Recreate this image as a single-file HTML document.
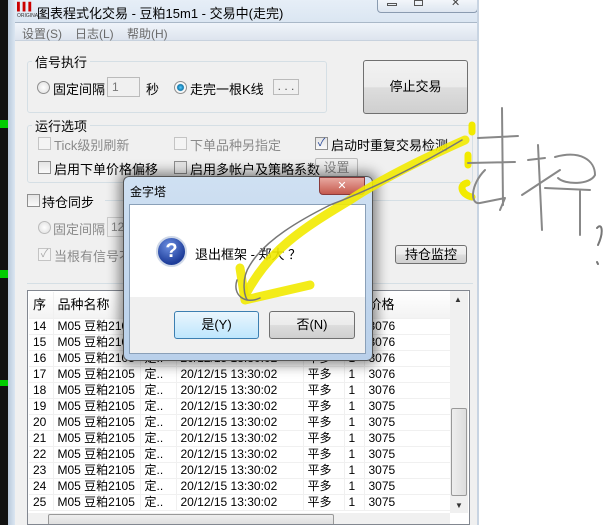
<!DOCTYPE html>
<html><head><meta charset="utf-8"><style>
*{margin:0;padding:0;box-sizing:border-box}
body{width:610px;height:525px;overflow:hidden;background:#fff;position:relative;font-family:"Liberation Sans","Noto Sans CJK SC",sans-serif;font-size:12px;color:#000}
.a{position:absolute;white-space:nowrap}
.cb{position:absolute;width:13px;height:13px;border:1px solid #8f8f8f;background:linear-gradient(#e4e4e4,#fafafa)}
.cb.d{border-color:#c4c4c4;background:#f4f4f4}
.rd{position:absolute;width:13px;height:13px;border-radius:50%;border:1px solid #8f8f8f;background:radial-gradient(#fff,#ddd)}
.btn{position:absolute;border:1px solid #707070;border-radius:3px;background:linear-gradient(#f2f2f2 0,#ebebeb 50%,#dddddd 51%,#cfcfcf);text-align:center}
.grp{position:absolute;border:1px solid #d5dfe5;border-radius:3px}
.lbl{position:absolute;background:#f0f0f0;padding:0 3px;font-size:13px}
table{border-collapse:collapse;font-size:12px;table-layout:fixed}
td{height:16px;line-height:14px;border-right:1px solid #f0f0f0;border-bottom:1px solid #f0f0f0;padding:0 0 0 4px;white-space:nowrap;overflow:hidden}
</style></head><body>
<div class="a" style="left:0;top:0;width:8px;height:525px;background:#111"></div>
<div class="a" style="left:0;top:120px;width:8px;height:8px;background:#0c0"></div>
<div class="a" style="left:0;top:270px;width:8px;height:8px;background:#0c0"></div>
<div class="a" style="left:0;top:380px;width:8px;height:6px;background:#0c0"></div>
<div class="a" style="left:8px;top:0;width:7px;height:525px;background:linear-gradient(90deg,#b9c9db,#dbe6f2)"></div>
<div class="a" style="left:15px;top:0;width:462px;height:22px;background:linear-gradient(#e6eef7,#dbe6f2)"></div>
<div class="a" style="left:17px;top:3px;width:16px;height:14px;font-size:8px;color:#c00;line-height:8px">▌▌▌<br><span style="font-size:5px;color:#333">ORIGINALS</span></div>
<div class="a" style="left:37px;top:3px;font-size:13px">图表程式化交易 - 豆粕15m1 - 交易中(走完)</div>
<div class="a" style="left:377px;top:-2px;width:101px;height:15px;border:1px solid #8a9bb0;border-radius:0 0 4px 4px;background:linear-gradient(#f4f7fb,#dde6f0)"></div>
<div class="a" style="left:387px;top:3px;width:10px;height:3px;border:1px solid #555"></div>
<div class="a" style="left:414px;top:0px;width:9px;height:6px;border:1px solid #555"></div>
<div class="a" style="left:451px;top:-4px;font-size:11px;color:#444">✕</div>
<div class="a" style="left:15px;top:22px;width:462px;height:19px;background:linear-gradient(#f0f4fa,#dde4ee);border-top:1px solid #aab8c8;border-bottom:1px solid #c8d2de"></div>
<div class="a" style="left:22px;top:25px;color:#6a6a6a">设置(S)</div>
<div class="a" style="left:75px;top:25px;color:#6a6a6a">日志(L)</div>
<div class="a" style="left:127px;top:25px;color:#6a6a6a">帮助(H)</div>
<div class="a" style="left:15px;top:41px;width:462px;height:484px;background:#f0f0f0"></div>
<div class="grp" style="left:27px;top:61px;width:300px;height:52px"></div>
<div class="lbl" style="left:32px;top:52px">信号执行</div>
<div class="rd" style="left:37px;top:81px"></div>
<div class="a" style="left:53px;top:79px;font-size:13px">固定间隔</div>
<div class="a" style="left:107px;top:77px;width:33px;height:20px;border:1px solid #bbb;background:#f0f0f0;color:#777;padding:2px 4px">1</div>
<div class="a" style="left:146px;top:79px;font-size:13px">秒</div>
<div class="rd" style="left:174px;top:81px;background:radial-gradient(#5cf 0,#17a 3px,#fff 4px,#ddd)"></div>
<div class="a" style="left:190px;top:79px;font-size:13px">走完一根K线</div>
<div class="a" style="left:273px;top:79px;width:26px;height:16px;border:1px solid #bbb;text-align:center;line-height:12px;color:#555">. . .</div>
<div class="btn" style="left:363px;top:60px;width:105px;height:54px;line-height:52px;font-size:13px">停止交易</div>
<div class="grp" style="left:27px;top:125px;width:446px;height:58px"></div>
<div class="lbl" style="left:32px;top:116px">运行选项</div>
<div class="cb d" style="left:38px;top:137px"></div><div class="a" style="left:54px;top:135px;color:#8a8a8a;font-size:13px">Tick级别刷新</div>
<div class="cb d" style="left:174px;top:137px"></div><div class="a" style="left:190px;top:135px;color:#8a8a8a;font-size:13px">下单品种另指定</div>
<div class="cb" style="left:315px;top:137px;color:#2a4a9a;font-size:11px;line-height:11px;text-align:center">✓</div><div class="a" style="left:331px;top:135px;font-size:13px">启动时重复交易检测</div>
<div class="cb" style="left:38px;top:161px"></div><div class="a" style="left:54px;top:159px;font-size:13px">启用下单价格偏移</div>
<div class="cb" style="left:174px;top:161px"></div><div class="a" style="left:190px;top:159px;font-size:13px">启用多帐户及策略系数</div>
<div class="a" style="left:315px;top:158px;width:43px;height:19px;border:1px solid #bbb;border-radius:2px;text-align:center;color:#888;line-height:17px;font-size:13px">设置</div>
<div class="cb" style="left:27px;top:194px"></div><div class="a" style="left:42px;top:192px;font-size:13px">持仓同步</div>
<div class="a" style="left:105px;top:200px;width:368px;height:1px;background:#d5dfe5"></div>
<div class="rd" style="left:38px;top:221px;border-color:#bbb"></div><div class="a" style="left:53px;top:219px;color:#8a8a8a;font-size:13px">固定间隔</div>
<div class="a" style="left:107px;top:217px;width:30px;height:20px;border:1px solid #ccc;color:#888;padding:2px 3px">12</div>
<div class="cb d" style="left:38px;top:248px;color:#aaa;font-size:11px;line-height:11px;text-align:center">✓</div><div class="a" style="left:54px;top:246px;color:#8a8a8a;font-size:13px">当根有信号不</div>
<div class="btn" style="left:395px;top:245px;width:72px;height:19px;line-height:17px;font-size:13px">持仓监控</div>
<div class="a" style="left:27px;top:283px;width:446px;height:1px;background:#d5dfe5"></div>
<div class="a" style="left:27px;top:290px;width:443px;height:235px;border:1px solid #828790;background:#fff;overflow:hidden">
<table style="position:absolute;left:1px;top:1px;width:422px">
<colgroup><col style="width:24px"><col style="width:87px"><col style="width:36px"><col style="width:127px"><col style="width:41px"><col style="width:20px"><col></colgroup>
<tr style="background:linear-gradient(#fff,#f3f3f3)"><td style="height:26px;line-height:24px;font-size:13px">序</td><td style="font-size:13px">品种名称</td><td></td><td></td><td></td><td></td><td style="font-size:13px">价格</td></tr>
<tr><td>14</td><td>M05 豆粕2105</td><td>定..</td><td>20/12/15 13:30:02</td><td>平多</td><td>1</td><td>3076</td></tr>
<tr><td>15</td><td>M05 豆粕2105</td><td>定..</td><td>20/12/15 13:30:02</td><td>平多</td><td>1</td><td>3076</td></tr>
<tr><td>16</td><td>M05 豆粕2105</td><td>定..</td><td>20/12/15 13:30:02</td><td>平多</td><td>1</td><td>3076</td></tr>
<tr><td>17</td><td>M05 豆粕2105</td><td>定..</td><td>20/12/15 13:30:02</td><td>平多</td><td>1</td><td>3076</td></tr>
<tr><td>18</td><td>M05 豆粕2105</td><td>定..</td><td>20/12/15 13:30:02</td><td>平多</td><td>1</td><td>3076</td></tr>
<tr><td>19</td><td>M05 豆粕2105</td><td>定..</td><td>20/12/15 13:30:02</td><td>平多</td><td>1</td><td>3075</td></tr>
<tr><td>20</td><td>M05 豆粕2105</td><td>定..</td><td>20/12/15 13:30:02</td><td>平多</td><td>1</td><td>3075</td></tr>
<tr><td>21</td><td>M05 豆粕2105</td><td>定..</td><td>20/12/15 13:30:02</td><td>平多</td><td>1</td><td>3075</td></tr>
<tr><td>22</td><td>M05 豆粕2105</td><td>定..</td><td>20/12/15 13:30:02</td><td>平多</td><td>1</td><td>3075</td></tr>
<tr><td>23</td><td>M05 豆粕2105</td><td>定..</td><td>20/12/15 13:30:02</td><td>平多</td><td>1</td><td>3075</td></tr>
<tr><td>24</td><td>M05 豆粕2105</td><td>定..</td><td>20/12/15 13:30:02</td><td>平多</td><td>1</td><td>3075</td></tr>
<tr><td>25</td><td>M05 豆粕2105</td><td>定..</td><td>20/12/15 13:30:02</td><td>平多</td><td>1</td><td>3075</td></tr>
</table>
<div class="a" style="left:422px;top:0;width:18px;height:222px;background:#f0f0f0"></div>
<div class="a" style="left:426px;top:4px;font-size:8px;color:#333">▲</div>
<div class="a" style="left:423px;top:117px;width:16px;height:88px;border:1px solid #999;border-radius:2px;background:linear-gradient(90deg,#eee,#ddd)"></div>
<div class="a" style="left:427px;top:210px;font-size:8px;color:#333">▼</div>
<div class="a" style="left:0;top:222px;width:422px;height:14px;background:#f0f0f0"></div>
<div class="a" style="left:20px;top:223px;width:286px;height:12px;border:1px solid #999;border-radius:2px;background:linear-gradient(#eee,#ddd)"></div>
</div>
<div class="a" style="left:477px;top:0;width:2px;height:525px;background:#c8d4e2"></div>
<div class="a" style="left:123px;top:176px;width:250px;height:185px;border:1px solid #555;border-radius:6px;background:linear-gradient(#cfe0f2,#b9d0ea);box-shadow:0 0 12px 4px rgba(0,0,0,.45)"></div>
<div class="a" style="left:130px;top:183px;font-size:12px">金字塔</div>
<div class="a" style="left:319px;top:177px;width:46px;height:18px;border:1px solid #8a3a3a;border-radius:0 0 4px 4px;background:linear-gradient(#e8a8a0,#c55a4e);color:#fff;text-align:center;font-size:11px;line-height:16px">✕</div>
<div class="a" style="left:129px;top:204px;width:237px;height:150px;border:1px solid #8aa0b8;background:#f0f0f0"></div>
<div class="a" style="left:130px;top:205px;width:235px;height:92px;background:#fff"></div>
<div class="a" style="left:156px;top:236px;width:31px;height:31px;border-radius:50%;background:radial-gradient(circle at 40% 30%,#6b8ee0,#1e3d9a 70%);border:2px solid #cfd8e8;color:#fff;font-weight:bold;font-size:20px;text-align:center;line-height:27px;font-family:'Liberation Sans',sans-serif">?</div>
<div class="a" style="left:195px;top:244px;font-size:13px">退出框架 - 郑大 ？</div>
<div class="a" style="left:174px;top:311px;width:85px;height:28px;border:1px solid #3c7fb1;border-radius:3px;background:linear-gradient(#eaf6fd,#bee6fd);text-align:center;line-height:26px;font-size:13px">是(Y)</div>
<div class="btn" style="left:269px;top:311px;width:86px;height:28px;line-height:26px;font-size:13px">否(N)</div>
<svg class="a" style="left:0;top:0" width="610" height="525">
<g fill="none" stroke-linecap="round" stroke-linejoin="round">
<path d="M465 140 C420 160 380 180 350 200 C300 230 270 250 247 292" stroke="#f2ea00" stroke-width="9" opacity=".9"/>
<path d="M240 268 L245 300 L310 285" stroke="#f2ea00" stroke-width="9" opacity=".9"/>
<path d="M472 125 L472 132 M468 155 L468 165 M467 183 C458 185 462 195 472 197" stroke="#f2ea00" stroke-width="7"/>
<path d="M462 140 C420 165 370 190 330 205 C300 220 265 240 250 265 C240 280 245 300 248 300 M237 280 C232 295 245 305 260 298" stroke="#777" stroke-width="1.5"/>
<path d="M502 108 L503 205 M478 138 L518 136 M468 163 L515 162 M485 170 C470 185 470 205 480 203 L505 198 L500 210" stroke="#888" stroke-width="2"/>
<path d="M528 160 L545 158 M538 145 L542 230 M522 195 L560 170 M555 157 C580 150 595 160 595 175 C590 185 565 185 558 178 M545 188 L590 190 M580 190 L580 235" stroke="#888" stroke-width="2"/>
<path d="M597 228 C602 222 604 232 598 245 M597 262 L598 264" stroke="#777" stroke-width="2"/>
</g></svg>
</body></html>
